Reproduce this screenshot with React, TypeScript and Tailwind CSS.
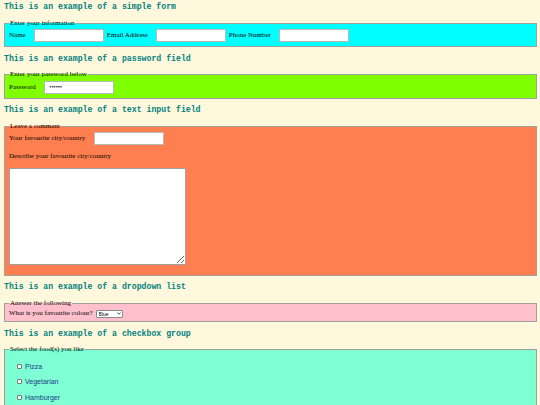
import React from 'react';

const headingCls =
  "font-['Liberation_Mono','Courier_New',monospace] text-[8.2px] leading-[10px] font-bold text-[#008080] mb-[6.5px]";
const fieldsetCls = 'border border-[#a0a0a0] px-[4px] pt-[1.5px] mb-[6.5px]';
const legendCls = 'px-[1px] text-[7px] leading-[9px] text-black';
const inputCls = 'h-[13px] w-[70px] bg-white border border-[#b8b8b8] text-[6px] px-[2px] outline-none';

function Heading({ children }: { children: React.ReactNode }) {
  return <h2 className={headingCls}>{children}</h2>;
}

export default function App() {
  const foods = ['Pizza', 'Vegetarian', 'Hamburger'];

  return (
    <div className="min-h-screen bg-[#fff8dc] pl-[4px] pr-[3px] pt-[2px] font-['Liberation_Serif','Times_New_Roman',serif] text-[7px] leading-[9px] text-black">
      <Heading>This is an example of a simple form</Heading>
      <fieldset className={`${fieldsetCls} bg-[#00ffff] pb-[4px]`}>
        <legend className={legendCls}>Enter your information</legend>
        <div className="flex items-center h-[13px]">
          <label>Name</label>
          <input type="text" className={`${inputCls} ml-[8.5px]`} />
          <label className="ml-[2.5px]">Email Address</label>
          <input type="text" className={`${inputCls} ml-[8.5px]`} />
          <label className="ml-[2.5px]">Phone Number</label>
          <input type="text" className={`${inputCls} ml-[8.5px]`} />
        </div>
      </fieldset>

      <Heading>This is an example of a password field</Heading>
      <fieldset className={`${fieldsetCls} bg-[#7fff00] pb-[4px]`}>
        <legend className={legendCls}>Enter your password below</legend>
        <div className="flex items-center h-[13px]">
          <label>Password</label>
          <input type="password" defaultValue="secret" className={`${inputCls} ml-[8.5px] text-[5.5px] px-[4px]`} />
        </div>
      </fieldset>

      <Heading>This is an example of a text input field</Heading>
      <fieldset className={`${fieldsetCls} bg-[#ff7f50] pb-[10px]`}>
        <legend className={legendCls}>Leave a comment</legend>
        <div className="flex items-center h-[13px]">
          <label>Your favourite city/country</label>
          <input type="text" className={`${inputCls} ml-[8.5px]`} />
        </div>
        <p className="mt-[6.5px]">Describe your favourite city/country</p>
        <textarea className="block mt-[7px] w-[177px] h-[97px] bg-white border border-[#a0a0a0] outline-none" />
      </fieldset>

      <Heading>This is an example of a dropdown list</Heading>
      <fieldset className={`${fieldsetCls} bg-[#ffc0cb] pb-[3px]`}>
        <legend className={legendCls}>Answer the following</legend>
        <div className="flex items-center h-[9px]">
          <label>What is you favourite colour?</label>
          <div className="relative ml-[3px] h-[8px] w-[27px]">
            <select
              defaultValue="Blue"
              className="block h-[8px] w-[27px] appearance-none bg-white border border-[#8a8a8a] rounded-[1px] pl-[2px] text-[5px] leading-[6px] font-['Liberation_Sans',Arial,sans-serif] outline-none"
            >
              <option>Blue</option>
              <option>Red</option>
              <option>Green</option>
            </select>
            <svg className="absolute right-[2px] top-[2.5px] pointer-events-none" width="4" height="3" viewBox="0 0 4 3">
              <path d="M0.4 0.5 L2 2.2 L3.6 0.5" fill="none" stroke="#222" strokeWidth="0.8" />
            </svg>
          </div>
        </div>
      </fieldset>

      <Heading>This is an example of a checkbox group</Heading>
      <fieldset className={`${fieldsetCls} bg-[#7fffd4] pb-[10px]`}>
        <legend className={legendCls}>Select the food(s) you like</legend>
        <div className="ml-[7.5px] pt-[6px] flex flex-col gap-[6.5px] font-['Liberation_Sans',Arial,sans-serif] text-[#1e3a8a]">
          {foods.map(f => (
            <label key={f} className="flex items-center h-[9px]">
              <input
                type="checkbox"
                className="appearance-none w-[5px] h-[5px] bg-white border border-[#767676] rounded-[1px]"
              />
              <span className="ml-[3.5px]">{f}</span>
            </label>
          ))}
        </div>
      </fieldset>
    </div>
  );
}
